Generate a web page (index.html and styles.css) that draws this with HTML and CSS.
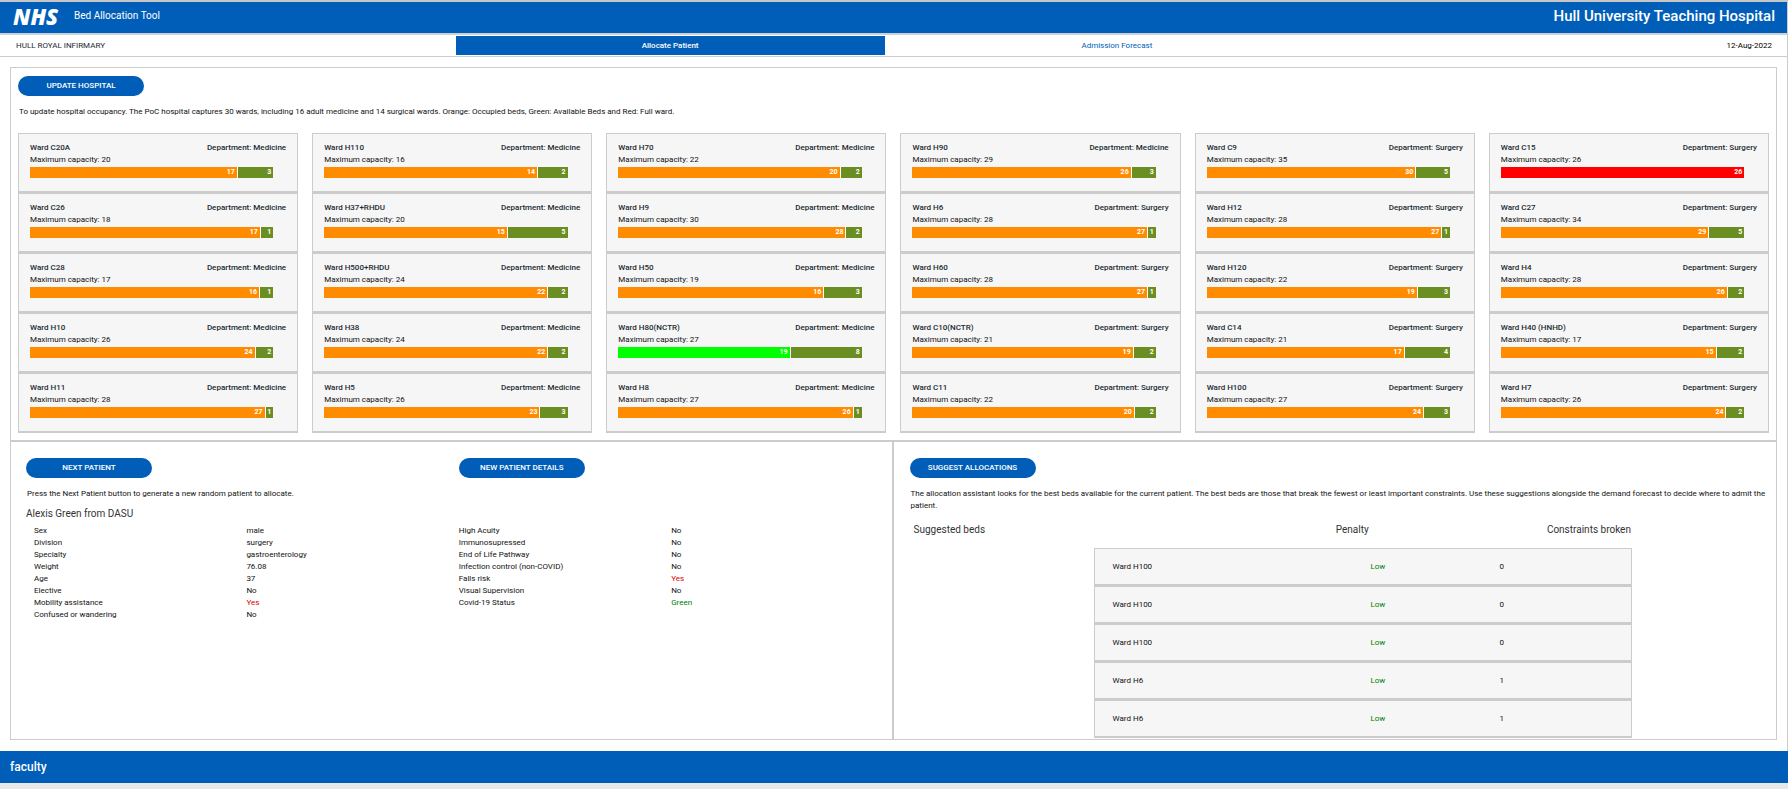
FILE: index.html
```html
<!DOCTYPE html>
<html lang="en">
<head>
<meta charset="utf-8">
<title>Bed Allocation Tool</title>
<link rel="stylesheet" href="styles.css">
</head>
<body>
<div class="page">
  <header class="banner">
    <span class="nhs-logo">NHS</span>
    <h1 class="app-name">Bed Allocation Tool</h1>
    <span class="trust-name">Hull University Teaching Hospital</span>
  </header>
  <nav class="subnav">
    <span class="site-name">HULL ROYAL INFIRMARY</span>
    <a class="tab tab-active" href="#allocate">Allocate Patient</a>
    <a class="tab" href="#forecast">Admission Forecast</a>
    <span class="date">12-Aug-2022</span>
  </nav>

  <main class="board" id="allocate">
    <section class="hospital">
      <button class="pill" type="button">UPDATE HOSPITAL</button>
      <p class="note">To update hospital occupancy. The PoC hospital captures 30 wards, including 16 adult medicine and 14 surgical wards. Orange: Occupied beds, Green: Available Beds and Red: Full ward.</p>
      <div class="wards" id="wards"></div>
    </section>

    <div class="lower">
      <section class="patient">
        <div><button class="pill" type="button">NEXT PATIENT</button></div>
        <div><button class="pill" type="button">NEW PATIENT DETAILS</button></div>
        <div class="patient-intro">
          <p class="note">Press the Next Patient button to generate a new random patient to allocate.</p>
          <h2 class="patient-name">Alexis Green from DASU</h2>
        </div>
        <table class="facts facts-indent">
          <tr><th scope="row">Sex</th><td>male</td></tr>
          <tr><th scope="row">Division</th><td>surgery</td></tr>
          <tr><th scope="row">Specialty</th><td>gastroenterology</td></tr>
          <tr><th scope="row">Weight</th><td>76.08</td></tr>
          <tr><th scope="row">Age</th><td>37</td></tr>
          <tr><th scope="row">Elective</th><td>No</td></tr>
          <tr><th scope="row">Mobility assistance</th><td class="alert">Yes</td></tr>
          <tr><th scope="row">Confused or wandering</th><td>No</td></tr>
        </table>
        <table class="facts">
          <tr><th scope="row">High Acuity</th><td>No</td></tr>
          <tr><th scope="row">Immunosupressed</th><td>No</td></tr>
          <tr><th scope="row">End of Life Pathway</th><td>No</td></tr>
          <tr><th scope="row">Infection control (non-COVID)</th><td>No</td></tr>
          <tr><th scope="row">Falls risk</th><td class="alert">Yes</td></tr>
          <tr><th scope="row">Visual Supervision</th><td>No</td></tr>
          <tr><th scope="row">Covid-19 Status</th><td class="good">Green</td></tr>
        </table>
      </section>

      <section class="suggest">
        <button class="pill" type="button">SUGGEST ALLOCATIONS</button>
        <p class="note">The allocation assistant looks for the best beds available for the current patient. The best beds are those that break the fewest or least important constraints. Use these suggestions alongside the demand forecast to decide where to admit the patient.</p>
        <table class="beds">
          <thead>
            <tr><th scope="col">Suggested beds</th><th scope="col">Penalty</th><th scope="col">Constraints broken</th></tr>
          </thead>
          <tbody>
            <tr><td>Ward H100</td><td class="good">Low</td><td>0</td></tr>
            <tr><td>Ward H100</td><td class="good">Low</td><td>0</td></tr>
            <tr><td>Ward H100</td><td class="good">Low</td><td>0</td></tr>
            <tr><td>Ward H6</td><td class="good">Low</td><td>1</td></tr>
            <tr><td>Ward H6</td><td class="good">Low</td><td>1</td></tr>
          </tbody>
        </table>
      </section>
    </div>
  </main>
</div>
<footer class="footer"><span class="faculty">faculty</span></footer>
<script src="script.js"></script>
</body>
</html>
```
FILE: styles.css
```css
* { box-sizing: border-box; }

body {
  margin: 0;
  background: #e8e8e8;
  color: #212b32;
  font-family: Roboto, "Liberation Sans", sans-serif;
  font-size: 8px;
  line-height: 12px;
}

h1, h2, p { margin: 0; font-weight: 400; }

.page {
  display: flow-root;
  background: #fff;
  border-top: 2px solid #c6c6c6;
  border-right: 1px solid #ccc;
}

.banner {
  display: flex;
  align-items: center;
  height: 33px;
  padding: 0 12px 4px 13px;
  background: #005eb8;
  border-bottom: 2px solid #ccd2d8;
  color: #fff;
}

.nhs-logo {
  width: 61px;
  font: italic 800 22px/24px "Open Sans", "Liberation Sans", sans-serif;
}

.app-name { font-size: 10px; }

.trust-name {
  margin-left: auto;
  font-size: 15px;
  font-weight: 500;
}

.subnav {
  display: grid;
  grid-template-columns: repeat(4, 1fr);
  padding: 1px 0;
  border-bottom: 1px solid #ccc;
  line-height: 19px;
}

.site-name { padding-left: 16px; }

.tab {
  margin: 0 9px;
  color: #005eb8;
  text-align: center;
  text-decoration: none;
}

.tab-active { background: #005eb8; color: #fff; font-weight: 500; }

.date { padding-right: 15px; color: #000; text-align: right; }

.board {
  margin: 10px 10px 11px;
  border: 1px solid #ccc;
  color: #111;
}

.hospital {
  padding: 8px 7px 7px;
  border-bottom: 2px solid #ccc;
}

.pill {
  display: block;
  width: 126px;
  height: 20px;
  padding: 0;
  border: 0;
  border-radius: 10px;
  background: #005eb8;
  color: #fff;
  font: 500 8px/20px Roboto, "Liberation Sans", sans-serif;
  text-align: center;
}

.note { margin-top: 10px; padding-left: 1px; }

.wards {
  display: grid;
  grid-template-columns: repeat(6, 1fr);
  grid-template-rows: repeat(5, auto);
  grid-auto-flow: column;
  column-gap: 14px;
  margin-top: 15px;
}

.ward {
  padding: 8px 11px 13px;
  border: 1px solid #ccc;
  border-bottom-width: 2px;
  background: #f6f6f6;
}

.ward-head {
  display: flex;
  justify-content: space-between;
  color: #212b32;
  font-weight: 500;
}

.ward-bar {
  display: flex;
  width: 95%;
  margin-top: 1px;
}

.beds-count {
  padding-right: 2px;
  color: #fff;
  font-size: 7px;
  font-weight: 700;
  line-height: 11px;
  text-align: right;
}

.beds-count + .beds-count { border-left: 1px solid #fff; }

.occupied { background: #ff8c00; }
.discharge { background: #0f0; }
.full { background: #f00; }
.available { background: #6b8e23; }

.lower {
  display: grid;
  grid-template-columns: 1fr 1fr;
}

.patient {
  display: grid;
  grid-template-columns: 1fr 1fr;
  align-content: start;
  align-items: start;
  padding: 16px 0 0 15px;
  border-right: 2px solid #ccc;
}

.patient-intro { grid-column: 1 / -1; }

.patient-name {
  margin: 6px 0 3px;
  color: #333;
  font-size: 10px;
  line-height: 16px;
}

.facts {
  width: 100%;
  padding-right: 8px;
  border-spacing: 0;
  table-layout: fixed;
}

.facts-indent { padding: 0 0 0 8px; }

.facts th, .facts td {
  width: 50%;
  padding: 0;
  font-weight: 400;
  text-align: left;
}

.facts .alert { color: #d00; }
.good { color: #008000; }

.suggest { padding: 16px 8px 1px 16px; }

.beds { display: block; margin: 10px 10px 0 0; }
.beds thead, .beds tbody { display: block; }

.beds tr {
  display: grid;
  grid-template-columns: 2fr 1fr 1fr;
}

.beds thead tr { padding-left: 4px; }

.beds th {
  padding: 0;
  color: #333;
  font-size: 10px;
  font-weight: 400;
  line-height: 16px;
  text-align: left;
}

.beds tbody {
  width: 63.4%;
  margin: 10px 0 0 21.8%;
}

.beds tbody tr {
  padding: 0 3px 0 17px;
  border: 1px solid #ccc;
  border-bottom-width: 2px;
  background: #f6f6f6;
}

.beds td { padding: 0; line-height: 35px; }

.footer {
  padding: 6px 10px;
  background: #005eb8;
  color: #fff;
}

.faculty {
  display: block;
  font-size: 12px;
  font-weight: 500;
  line-height: 20px;
}
```
FILE: script.js
```js
// Ward name, department, occupied beds, available beds, optional bar style
const wards = [
  ["C20A", "Medicine", 17, 3], ["C26", "Medicine", 17, 1], ["C28", "Medicine", 16, 1],
  ["H10", "Medicine", 24, 2], ["H11", "Medicine", 27, 1],
  ["H110", "Medicine", 14, 2], ["H37+RHDU", "Medicine", 15, 5], ["H500+RHDU", "Medicine", 22, 2],
  ["H38", "Medicine", 22, 2], ["H5", "Medicine", 23, 3],
  ["H70", "Medicine", 20, 2], ["H9", "Medicine", 28, 2], ["H50", "Medicine", 16, 3],
  ["H80(NCTR)", "Medicine", 19, 8, "discharge"], ["H8", "Medicine", 26, 1],
  ["H90", "Medicine", 26, 3], ["H6", "Surgery", 27, 1], ["H60", "Surgery", 27, 1],
  ["C10(NCTR)", "Surgery", 19, 2], ["C11", "Surgery", 20, 2],
  ["C9", "Surgery", 30, 5], ["H12", "Surgery", 27, 1], ["H120", "Surgery", 19, 3],
  ["C14", "Surgery", 17, 4], ["H100", "Surgery", 24, 3],
  ["C15", "Surgery", 26, 0, "full"], ["C27", "Surgery", 29, 5], ["H4", "Surgery", 26, 2],
  ["H40 (HNHD)", "Surgery", 15, 2], ["H7", "Surgery", 24, 2]
];

const segment = (kind, count, total) =>
  count ? `<span class="beds-count ${kind}" style="width:${count / total * 100}%">${count}</span>` : "";

document.getElementById("wards").innerHTML = wards.map(([name, dept, used, free, kind = "occupied"]) => `
  <article class="ward">
    <div class="ward-head"><span>Ward ${name}</span><span>Department: ${dept}</span></div>
    <div>Maximum capacity: ${used + free}</div>
    <div class="ward-bar">${segment(kind, used, used + free)}${segment("available", free, used + free)}</div>
  </article>`).join("");
```
